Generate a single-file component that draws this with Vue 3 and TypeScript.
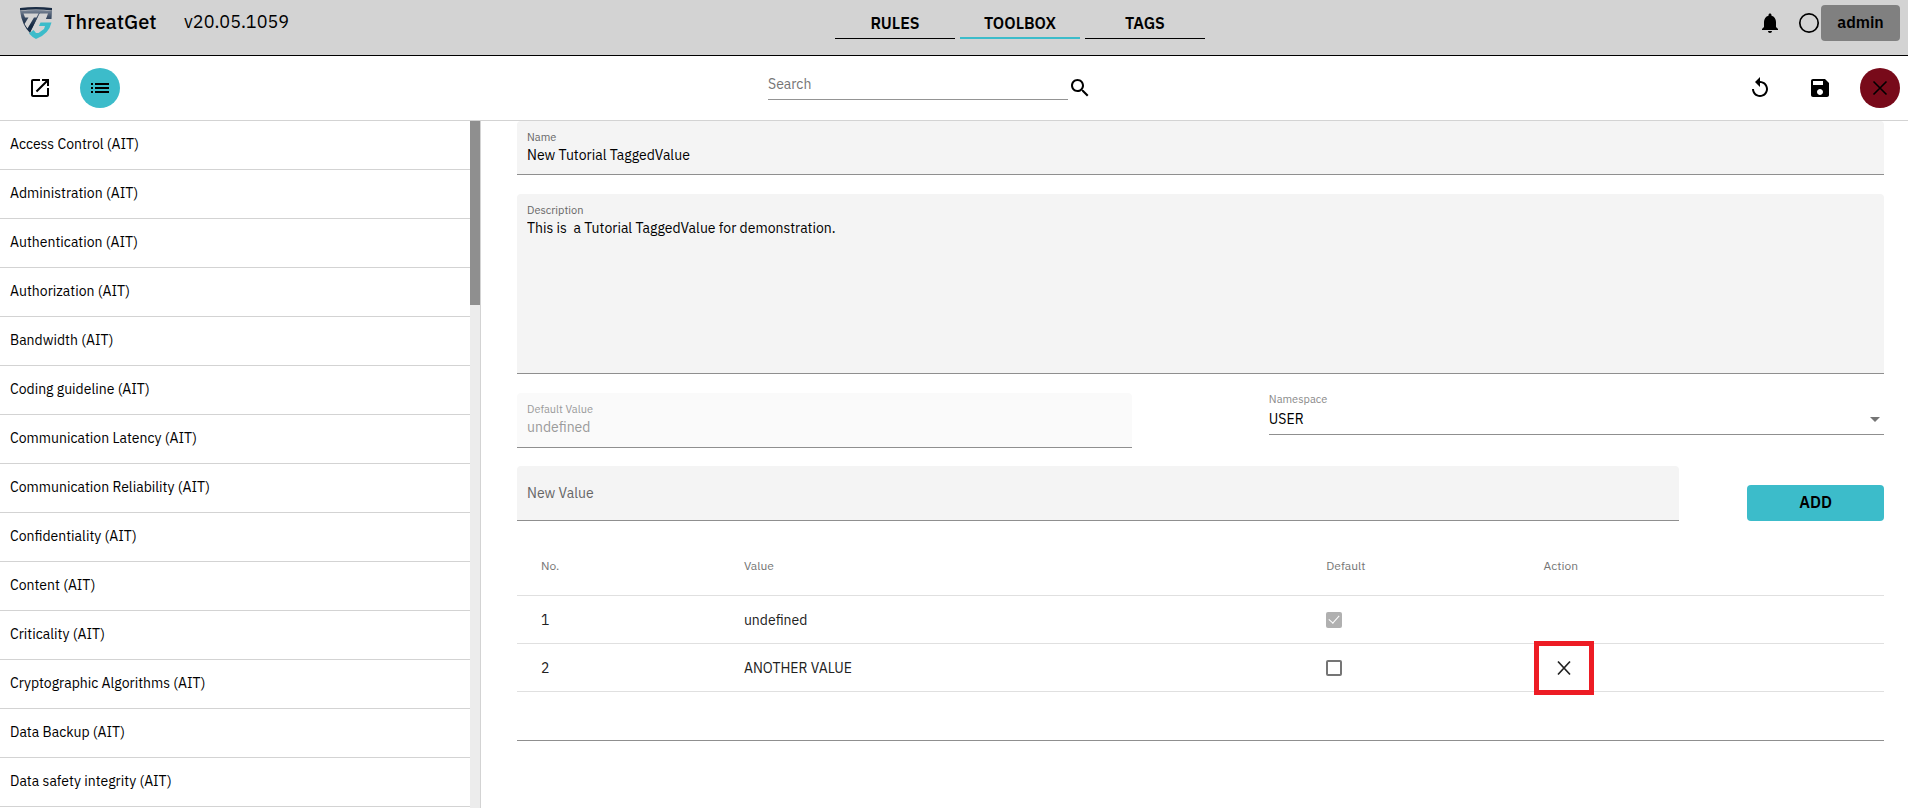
<script setup lang="ts">
import { ref } from 'vue'

interface ValueRow {
  value: string
  isDefault: boolean
  locked: boolean
}

const tabs = ['RULES', 'TOOLBOX', 'TAGS']
const activeTab = ref('TOOLBOX')

const items = [
  'Access Control (AIT)',
  'Administration (AIT)',
  'Authentication (AIT)',
  'Authorization (AIT)',
  'Bandwidth (AIT)',
  'Coding guideline (AIT)',
  'Communication Latency (AIT)',
  'Communication Reliability (AIT)',
  'Confidentiality (AIT)',
  'Content (AIT)',
  'Criticality (AIT)',
  'Cryptographic Algorithms (AIT)',
  'Data Backup (AIT)',
  'Data safety integrity (AIT)',
]

const search = ref('')
const name = ref('New Tutorial TaggedValue')
const description = ref('This is  a Tutorial TaggedValue for demonstration.')
const namespace = ref('USER')
const newValue = ref('')
const rows = ref<ValueRow[]>([
  { value: 'undefined', isDefault: true, locked: true },
  { value: 'ANOTHER VALUE', isDefault: false, locked: false },
])

function addValue(): void {
  if (!newValue.value) return
  rows.value.push({ value: newValue.value, isDefault: false, locked: false })
  newValue.value = ''
}

function removeRow(index: number): void {
  rows.value.splice(index, 1)
}
</script>

<template>
  <div class="app">
    <header class="topbar">
      <div class="brand">
        <svg class="logo" viewBox="0 0 32 32" aria-hidden="true">
          <defs>
            <linearGradient id="navy" x1="0" y1="0" x2="0" y2="1">
              <stop offset="0" stop-color="#7c8797" />
              <stop offset="0.3" stop-color="#3d4e66" />
              <stop offset="0.7" stop-color="#13263f" />
              <stop offset="1" stop-color="#1c3450" />
            </linearGradient>
          </defs>
          <path fill="#1a2c44" d="M0 1Q16-1 32 1v2.500Q16 1.500 0 3.500z" />
          <path fill="url(#navy)" d="M0 4Q16 2 32 4L31.500 12H26l1-5h-7.500L10 26Q2 18 0 4z" />
          <path fill="#d3d3d3" d="M3.500 6.500H18.500L16.500 10.500H14L7.500 21.500 4.500 17 8.500 10.500H5z" />
          <path fill="#d3d3d3" d="M20 6.500h8L26.500 10.500h-4.500L16 22l-3 1.500-2 1z" />
          <path fill="#3cbcca" d="M20.500 15.500h11Q29 27 16 32 12 30 9 26.500L13.500 23l2.500 3h2.500l5.500-4 1-3h-6z" />
        </svg>
        <span class="product">ThreatGet</span>
        <span class="version">v20.05.1059</span>
      </div>
      <nav class="tabs">
        <a
          v-for="tab in tabs"
          :key="tab"
          href="#"
          class="tab"
          :class="{ active: tab === activeTab }"
          @click.prevent="activeTab = tab"
        >{{ tab }}</a>
      </nav>
      <div class="account">
        <button class="icon-button bell" type="button" aria-label="Notifications">
          <svg class="icon" viewBox="0 0 24 24"><path d="M12 22c1.100 0 2-.9 2-2h-4c0 1.100.89 2 2 2zm6-6v-5c0-3.070-1.640-5.640-4.500-6.320V4c0-.83-.67-1.500-1.500-1.500s-1.500.67-1.500 1.500v.68C7.630 5.360 6 7.920 6 11v5l-2 2v1h16v-1l-2-2z" /></svg>
        </button>
        <button class="icon-button" type="button" aria-label="Status">
          <svg class="icon" viewBox="0 0 24 24"><circle cx="12" cy="12" r="9.200" fill="none" stroke="#000" stroke-width="1.700" /></svg>
        </button>
        <button class="admin" type="button">admin</button>
      </div>
    </header>

    <div class="toolbar">
      <div class="tools">
        <button class="round" type="button" aria-label="Open in new window">
          <svg class="icon" viewBox="0 0 24 24"><path d="M19 19H5V5h7V3H5c-1.110 0-2 .9-2 2v14c0 1.100.89 2 2 2h14c1.100 0 2-.9 2-2v-7h-2v7zM14 3v2h3.590l-9.830 9.830 1.410 1.410L19 6.410V10h2V3h-7z" /></svg>
        </button>
        <button class="round teal" type="button" aria-label="List">
          <svg class="icon" viewBox="0 0 24 24"><path d="M3 13h2v-2H3v2zm0 4h2v-2H3v2zm0-8h2V7H3v2zm4 4h14v-2H7v2zm0 4h14v-2H7v2zM7 7v2h14V7H7z" /></svg>
        </button>
      </div>
      <div class="search">
        <input v-model="search" class="search-input" type="text" placeholder="Search" aria-label="Search" />
        <button class="icon-button" type="button" aria-label="Run search">
          <svg class="icon" viewBox="0 0 24 24"><path d="M15.500 14h-.79l-.28-.27C15.410 12.590 16 11.110 16 9.500 16 5.910 13.090 3 9.500 3S3 5.910 3 9.500 5.910 16 9.500 16c1.610 0 3.090-.59 4.230-1.570l.27.28v.79l5 4.990L20.490 19l-4.990-5zm-6 0C7.010 14 5 11.990 5 9.500S7.010 5 9.500 5 14 7.010 14 9.500 11.990 14 9.500 14z" /></svg>
        </button>
      </div>
      <div class="tools end">
        <button class="round" type="button" aria-label="Reset">
          <svg class="icon" viewBox="0 0 24 24"><path d="M12 5V1L7 6l5 5V7c3.310 0 6 2.690 6 6s-2.690 6-6 6-6-2.690-6-6H4c0 4.420 3.580 8 8 8s8-3.580 8-8-3.580-8-8-8z" /></svg>
        </button>
        <button class="round" type="button" aria-label="Save">
          <svg class="icon" viewBox="0 0 24 24"><path d="M17 3H5c-1.110 0-2 .9-2 2v14c0 1.100.89 2 2 2h14c1.100 0 2-.9 2-2V7l-4-4zm-5 16c-1.660 0-3-1.340-3-3s1.340-3 3-3 3 1.340 3 3-1.340 3-3 3zm3-10H5V5h10v4z" /></svg>
        </button>
        <button class="round crimson" type="button" aria-label="Close">
          <svg class="icon" viewBox="0 0 24 24"><path d="M5.500 5.500l13 13M18.500 5.500l-13 13" fill="none" stroke="#000" stroke-width="1.600" /></svg>
        </button>
      </div>
    </div>

    <div class="body">
      <aside class="sidebar">
        <ul class="list">
          <li v-for="item in items" :key="item" class="item">{{ item }}</li>
        </ul>
        <div class="track"><div class="thumb"></div></div>
      </aside>

      <main class="content">
        <div class="field">
          <label for="name">Name</label>
          <input id="name" v-model="name" type="text" />
        </div>
        <div class="field tall">
          <label for="description">Description</label>
          <textarea id="description" v-model="description"></textarea>
        </div>
        <div class="pair">
          <div class="field half disabled">
            <label for="default-value">Default Value</label>
            <input id="default-value" type="text" value="undefined" disabled />
          </div>
          <div class="select-field half">
            <label for="namespace">Namespace</label>
            <div class="select-box">
              <select id="namespace" v-model="namespace">
                <option>USER</option>
              </select>
              <svg class="arrow" viewBox="0 0 10 5" aria-hidden="true"><path d="M0 0h10L5 5z" /></svg>
            </div>
          </div>
        </div>
        <div class="pair add-row">
          <div class="field single">
            <input v-model="newValue" type="text" placeholder="New Value" aria-label="New Value" />
          </div>
          <button class="add" type="button" @click="addValue">ADD</button>
        </div>
        <div class="table-box">
          <table class="values">
            <thead>
              <tr>
                <th class="col-no">No.</th>
                <th class="col-value">Value</th>
                <th class="col-default">Default</th>
                <th>Action</th>
              </tr>
            </thead>
            <tbody>
              <tr v-for="(row, index) in rows" :key="index">
                <td>{{ index + 1 }}</td>
                <td>{{ row.value }}</td>
                <td>
                  <input
                    v-model="row.isDefault"
                    class="check"
                    type="checkbox"
                    :disabled="row.locked"
                    :aria-label="'Default: ' + row.value"
                  />
                </td>
                <td>
                  <div v-if="!row.locked" class="action">
                    <button class="icon-button" type="button" aria-label="Remove value" @click="removeRow(index)">
                      <svg class="icon" viewBox="0 0 24 24"><path d="M6 5.500l12 13M18 5.500l-12 13" fill="none" stroke="#222" stroke-width="1.700" /></svg>
                    </button>
                    <span class="highlight"></span>
                  </div>
                </td>
              </tr>
            </tbody>
          </table>
        </div>
      </main>
    </div>
  </div>
</template>

<style>
body {
  margin: 0;
  overflow: hidden;
}
</style>

<style scoped>
.app {
  display: flex;
  flex-direction: column;
  height: 100vh;
  background: #fff;
  color: #000;
  font-family: "IBM Plex Sans", "Noto Sans", "Liberation Sans", sans-serif;
  font-size: 14px;
}
.app * {
  box-sizing: border-box;
}
button,
input,
select,
textarea {
  font: inherit;
  color: inherit;
  margin: 0;
  padding: 0;
  border: 0;
  background: none;
  outline: 0;
}
button {
  cursor: pointer;
}
.icon {
  display: block;
  width: 24px;
  height: 24px;
}
.icon-button {
  flex: none;
  width: 24px;
  height: 24px;
}
.topbar {
  flex: none;
  display: grid;
  grid-template-columns: 835fr 370px 703fr;
  align-items: start;
  height: 56px;
  padding-top: 5px;
  background: #d3d3d3;
  border-bottom: 1px solid #000;
}
.brand {
  display: flex;
  align-items: center;
  height: 36px;
  padding-left: 20px;
}
.logo {
  width: 32px;
  height: 32px;
  margin-right: 12px;
}
.product {
  width: 120px;
  font-size: 20px;
  font-weight: 500;
  line-height: 32px;
}
.version {
  font-size: 18px;
  line-height: 32px;
}
.product,
.version {
  padding-bottom: 2px;
}
.tabs {
  display: flex;
  gap: 5px;
}
.tab {
  flex: 1;
  height: 34px;
  border-bottom: 1px solid #000;
  color: #000;
  font-size: 16px;
  font-weight: 600;
  line-height: 36px;
  text-align: center;
  text-decoration: none;
}
.tab.active {
  border-bottom: 2px solid #3cbcca;
}
.account {
  display: flex;
  align-items: center;
  justify-content: flex-end;
  padding-right: 8px;
}
.bell {
  margin-right: 15px;
}
.admin {
  width: 79px;
  height: 36px;
  padding-bottom: 2px;
  border-radius: 4px;
  background: #808080;
  font-size: 16px;
  font-weight: 600;
}
.toolbar {
  flex: none;
  display: grid;
  grid-template-columns: 768fr 324px 816fr;
  align-items: center;
  height: 65px;
  border-bottom: 1px solid #d3d3d3;
}
.tools {
  display: flex;
  gap: 20px;
  padding: 0 20px;
}
.tools.end {
  justify-content: flex-end;
  padding: 0 8px;
}
.round {
  display: grid;
  place-items: center;
  width: 40px;
  height: 40px;
  border-radius: 50%;
}
.teal {
  background: #3cbcca;
}
.crimson {
  background: #780a1a;
}
.search {
  display: flex;
  align-items: center;
}
.search-input {
  flex: 1;
  min-width: 0;
  height: 24px;
  padding-bottom: 8px;
  border-bottom: 1px solid #949494;
}
.search-input::placeholder {
  color: #757575;
  opacity: 1;
}
.body {
  flex: 1;
  display: flex;
  min-height: 0;
}
.sidebar {
  flex: none;
  display: flex;
  width: 481px;
  border-right: 1px solid #d3d3d3;
  overflow: hidden;
}
.list {
  flex: 1;
  margin: 0;
  padding: 0;
  list-style: none;
}
.item {
  height: 49px;
  padding-left: 10px;
  border-bottom: 1px solid #d3d3d3;
  line-height: 47px;
}
.track {
  width: 10px;
  background: #ececec;
}
.thumb {
  height: 184px;
  background: #8f8f8f;
}
.content {
  flex: 1;
  min-width: 0;
  padding: 0 24px 0 36px;
  overflow: hidden;
}
.field {
  display: flex;
  flex-direction: column;
  height: 54px;
  margin-bottom: 19px;
  padding: 8px 10px 0;
  border-bottom: 1px solid #8f8f8f;
  border-radius: 4px 4px 0 0;
  background: #f4f4f4;
}
.field label,
.select-field label {
  height: 16px;
  color: #666;
  font-size: 11px;
  line-height: 16px;
}
.field input,
.field textarea {
  display: block;
  width: 100%;
  height: 20px;
  line-height: 20px;
}
.field textarea {
  height: 146px;
  resize: none;
}
.tall {
  height: 180px;
}
.pair {
  display: flex;
  align-items: flex-start;
  justify-content: space-between;
}
.half {
  width: 45%;
}
.disabled {
  height: 55px;
  margin-bottom: 18px;
  background: #fafafa;
}
.disabled label,
.disabled input {
  color: #9b9b9b;
}
.select-field label {
  display: block;
  color: #888;
  line-height: 12px;
}
.select-box {
  display: flex;
  align-items: center;
  height: 26px;
  padding: 0 4px 5px 0;
  border-bottom: 1px solid #8f8f8f;
}
.select-box select {
  flex: 1;
  height: 20px;
  appearance: none;
}
.arrow {
  width: 10px;
  height: 5px;
  fill: #757575;
}
.add-row {
  align-items: flex-end;
}
.single {
  width: 85%;
  height: 55px;
  margin: 0;
  padding-top: 17px;
}
.single input::placeholder {
  color: #666;
  opacity: 1;
}
.add {
  width: 10%;
  height: 36px;
  padding-bottom: 3px;
  border-radius: 4px;
  background: #3cbcca;
  font-size: 16px;
  font-weight: 600;
}
.table-box {
  margin-top: 19px;
  padding-bottom: 48px;
  border-bottom: 1px solid #8f8f8f;
}
.values {
  width: 100%;
  table-layout: fixed;
  border-collapse: separate;
  border-spacing: 0;
  text-align: left;
}
.values th {
  height: 56px;
  padding: 0 0 4px;
  border-bottom: 1px solid #e0e0e0;
  color: #757575;
  font-size: 12px;
  font-weight: 400;
}
.values td {
  height: 48px;
  padding: 0;
  border-bottom: 1px solid #e0e0e0;
  color: #212121;
  line-height: 20px;
}
.values th:first-child,
.values td:first-child {
  padding-left: 24px;
}
.values .col-no {
  width: 16.6%;
}
.values .col-value {
  width: 42.6%;
}
.values .col-default {
  width: 15.9%;
}
.check {
  display: block;
  width: 16px;
  height: 16px;
  appearance: none;
  border: 2px solid #757575;
  border-radius: 2px;
}
.check:checked {
  display: grid;
  place-items: center;
  border: 0;
  background: #757575;
}
.check:disabled {
  background: #b0b0b0;
}
.check:checked::after {
  content: "";
  width: 5px;
  height: 9px;
  margin-bottom: 3px;
  border: solid #fff;
  border-width: 0 1px 1px 0;
  transform: rotate(42deg);
}
.action {
  position: relative;
  display: flex;
  justify-content: center;
  width: 40px;
}
.highlight {
  position: absolute;
  inset: -15px -10px;
  border: 5px solid #ed1c24;
  pointer-events: none;
}
</style>
